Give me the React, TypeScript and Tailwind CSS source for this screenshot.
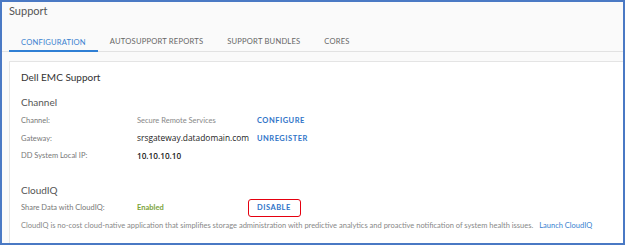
import React from "react";

const F = { fontFamily: "Lato, 'Open Sans', sans-serif" };
const V = { fontFamily: "'Open Sans', sans-serif" };

export default function App() {
  return (
    <div className="w-[625px] h-[246px] bg-white" style={F}>
      <div className="w-[625px] h-[245px] border-2 border-[#4a79c4] bg-[#fafafa] flex flex-col overflow-hidden">
        <div className="h-[19px] pl-[7px] flex items-center text-[11px] text-[#555]">Support</div>
        <div className="h-[31px] flex items-end border-b border-[#e2e2e2] pl-[7px]">
          <div className="h-[17px] px-[12px] flex items-center border-b-2 border-[#2f7fd4] text-[7.6px] tracking-[0.2px] text-[#3b82d0] -mb-px">CONFIGURATION</div>
          <div className="h-[17px] px-[12px] flex items-center pb-[2px] text-[7.6px] tracking-[0.2px] text-[#666]">AUTOSUPPORT REPORTS</div>
          <div className="h-[17px] px-[12px] flex items-center pb-[2px] text-[7.6px] tracking-[0.2px] text-[#666]">SUPPORT BUNDLES</div>
          <div className="h-[17px] px-[12px] flex items-center pb-[2px] text-[7.6px] tracking-[0.2px] text-[#666]">CORES</div>
        </div>
        <div className="mt-[9px] ml-[7px] flex-1 bg-white border border-[#e4e4e4] border-r-0 border-b-0 pl-[11px] flex flex-col">
          <div className="h-[30px] flex items-center text-[10px] text-[#333]">Dell EMC Support</div>
          <div className="h-[20px] flex items-center text-[10px] text-[#555]">Channel</div>
          <div className="h-[18px] flex items-center">
            <div className="w-[116px] text-[7.5px] text-[#777]">Channel:</div>
            <div className="w-[120px] text-[7.5px] text-[#888]">Secure Remote Services</div>
            <div className="text-[7.5px] font-bold tracking-[0.5px] text-[#2f74c8]">CONFIGURE</div>
          </div>
          <div className="h-[17px] flex items-center">
            <div className="w-[116px] text-[7.5px] text-[#777]">Gateway:</div>
            <div className="w-[120px] text-[8.4px] font-medium text-[#222]" style={V}>srsgateway.datadomain.com</div>
            <div className="text-[7.5px] font-bold tracking-[0.5px] text-[#2f74c8]">UNREGISTER</div>
          </div>
          <div className="h-[18px] flex items-center">
            <div className="w-[116px] text-[7.5px] text-[#777]">DD System Local IP:</div>
            <div className="w-[120px] text-[8.2px] font-semibold text-[#222]" style={V}>10.10.10.10</div>
          </div>
          <div className="mt-[16px] h-[18px] flex items-center text-[10px] text-[#555]">CloudIQ</div>
          <div className="h-[18px] flex items-center">
            <div className="w-[116px] text-[7.5px] text-[#777]">Share Data with CloudIQ:</div>
            <div className="w-[111px] text-[7.5px] font-bold text-[#7aa33a]">Enabled</div>
            <div className="h-[18px] w-[53px] border border-[#e5000f] rounded-[3px] flex items-center pl-[8px] text-[7.5px] font-bold tracking-[0.5px] text-[#2f74c8]">DISABLE</div>
          </div>
          <div className="h-[18px] flex items-center text-[7.5px] text-[#888] whitespace-nowrap">
            CloudIQ is no-cost cloud-native application that simplifies storage administration with predictive analytics and proactive notification of system health issues.
            <span className="ml-[6px] text-[#3a7fd0]">Launch CloudIQ</span>
          </div>
        </div>
      </div>
    </div>
  );
}
